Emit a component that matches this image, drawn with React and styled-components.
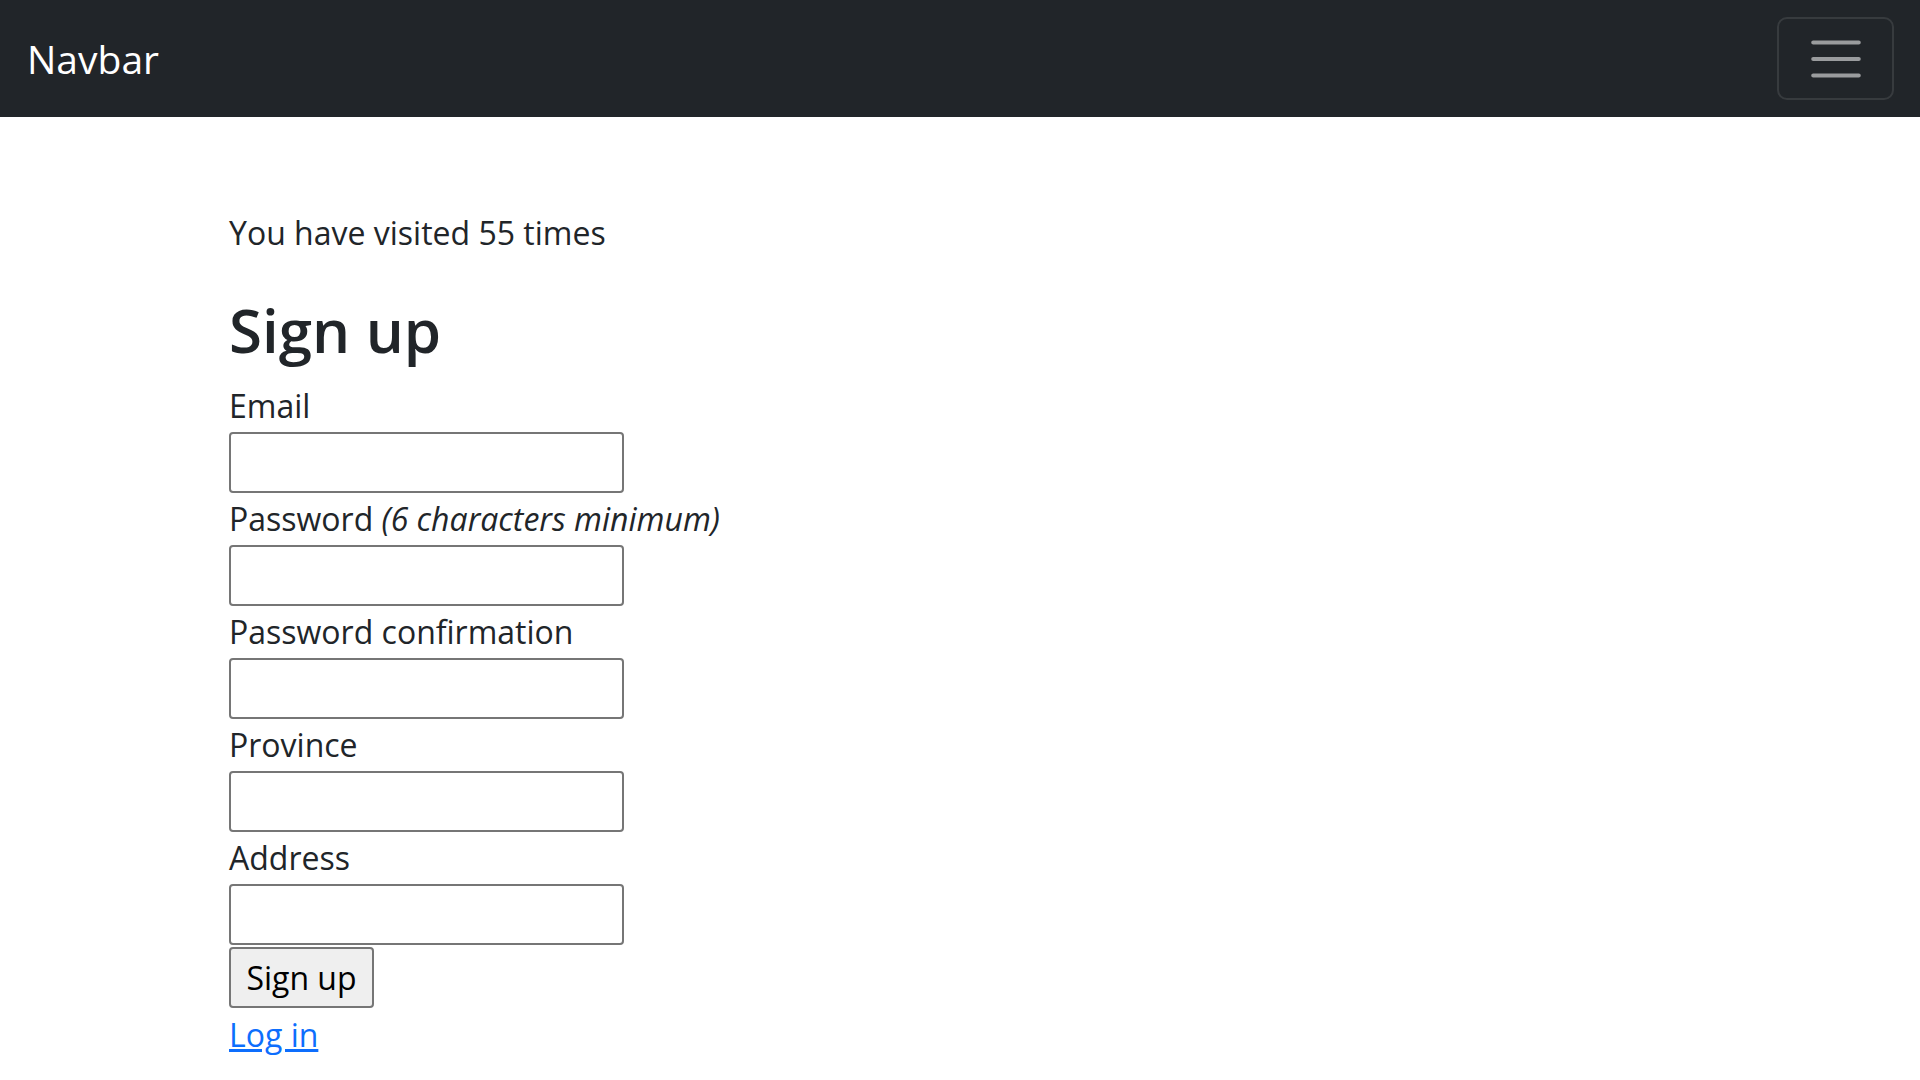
import React from 'react';
import styled, { createGlobalStyle } from 'styled-components';

const GlobalStyle = createGlobalStyle`
  html, body {
    margin: 0;
    padding: 0;
    background: #fff;
  }
  body {
    font-family: "Open Sans", "Noto Sans", "Liberation Sans", sans-serif;
    font-size: 32px;
    line-height: 50px;
    color: #212529;
  }
  * {
    box-sizing: border-box;
  }
`;

const Nav = styled.nav`
  height: 117px;
  background: #212529;
  display: flex;
  align-items: center;
  justify-content: space-between;
  padding: 0 26px 0 27px;
`;

const Brand = styled.a`
  color: #fff;
  font-size: 39px;
  line-height: 60px;
  text-decoration: none;
`;

const Toggler = styled.button`
  width: 117px;
  height: 83px;
  display: flex;
  align-items: center;
  justify-content: center;
  background: transparent;
  border: 2px solid rgba(255, 255, 255, 0.1);
  border-radius: 10px;
  padding: 0;
  cursor: pointer;
`;

const Main = styled.main`
  padding: 91px 0 40px 229px;
`;

const Visits = styled.p`
  margin: 0 0 39px;
  line-height: 50px;
`;

const Title = styled.h1`
  margin: 0 0 17px;
  font-size: 60px;
  line-height: 66px;
  font-weight: 600;
`;

const Form = styled.form`
  display: flex;
  flex-direction: column;
  align-items: flex-start;
`;

const Label = styled.label`
  display: block;
  line-height: 52px;
  em {
    font-style: italic;
  }
`;

const Input = styled.input`
  display: block;
  width: 395px;
  height: 61px;
  border: 2px solid #767676;
  border-radius: 4px;
  padding: 2px 4px;
  font: inherit;
  background: #fff;
`;

const Submit = styled.button`
  margin-top: 2px;
  width: 145px;
  height: 61px;
  background: #efefef;
  border: 2px solid #767676;
  border-radius: 4px;
  font-family: inherit;
  font-size: 32px;
  color: #000;
  padding: 0 10px;
  cursor: pointer;
`;

const LinkRow = styled.div`
  margin-top: 2px;
  line-height: 50px;
`;

const Link = styled.a`
  color: #0d6efd;
  text-decoration: underline;
`;

function MenuIcon() {
  return (
    <svg width="62" height="62" viewBox="0 0 30 30">
      <path
        d="M4 7h22M4 15h22M4 23h22"
        stroke="rgba(255,255,255,0.55)"
        strokeWidth="2"
        strokeLinecap="round"
        strokeMiterlimit="10"
      />
    </svg>
  );
}

function Field({ id, type = 'text', children }) {
  return (
    <>
      <Label htmlFor={id}>{children}</Label>
      <Input id={id} type={type} />
    </>
  );
}

export default function App() {
  return (
    <>
      <GlobalStyle />
      <Nav>
        <Brand href="#">Navbar</Brand>
        <Toggler aria-label="Toggle navigation">
          <MenuIcon />
        </Toggler>
      </Nav>
      <Main>
        <Visits>You have visited 55 times</Visits>
        <Title>Sign up</Title>
        <Form onSubmit={e => e.preventDefault()}>
          <Field id="email" type="email">Email</Field>
          <Field id="password" type="password">
            Password <em>(6 characters minimum)</em>
          </Field>
          <Field id="password_confirmation" type="password">Password confirmation</Field>
          <Field id="province">Province</Field>
          <Field id="address">Address</Field>
          <Submit type="submit">Sign up</Submit>
        </Form>
        <LinkRow>
          <Link href="#">Log in</Link>
        </LinkRow>
      </Main>
    </>
  );
}
